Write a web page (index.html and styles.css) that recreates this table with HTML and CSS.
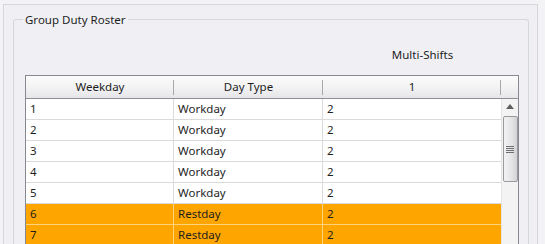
FILE: index.html
```html
<!DOCTYPE html>
<html>
<head>
<meta charset="utf-8">
<link rel="stylesheet" href="styles.css">
</head>
<body>
<div class="frame">
  <fieldset class="group">
    <legend class="group-title">Group Duty Roster</legend>
    <div class="caption-row"><span class="caption">Multi-Shifts</span></div>
    <div class="grid">
      <div class="header">
        <div class="hcell c1">Weekday<span class="hsep"></span></div>
        <div class="hcell c2">Day Type<span class="hsep"></span></div>
        <div class="hcell c3">1<span class="hsep"></span></div>
        <div class="hcell c4"></div>
      </div>
      <div class="body">
        <div class="rows">
          <div class="row"><div class="cell c1">1</div><div class="cell c2">Workday</div><div class="cell c3">2</div></div>
          <div class="row"><div class="cell c1">2</div><div class="cell c2">Workday</div><div class="cell c3">2</div></div>
          <div class="row"><div class="cell c1">3</div><div class="cell c2">Workday</div><div class="cell c3">2</div></div>
          <div class="row"><div class="cell c1">4</div><div class="cell c2">Workday</div><div class="cell c3">2</div></div>
          <div class="row"><div class="cell c1">5</div><div class="cell c2">Workday</div><div class="cell c3">2</div></div>
          <div class="row rest"><div class="cell c1">6</div><div class="cell c2">Restday</div><div class="cell c3">2</div></div>
          <div class="row rest"><div class="cell c1">7</div><div class="cell c2">Restday</div><div class="cell c3">2</div></div>
        </div>
        <div class="scrollbar">
          <svg class="arrow" width="8" height="5" viewBox="0 0 8 5"><path d="M0 5 L4 0 L8 5 Z" fill="#5f5f5f"/></svg>
          <div class="thumb">
            <div class="grip"><span></span><span></span><span></span><span></span></div>
          </div>
        </div>
      </div>
    </div>
  </fieldset>
</div>
</body>
</html>
```
FILE: styles.css
```css
html, body {
  margin: 0;
  padding: 0;
  overflow: hidden;
}
body {
  background: #f3f3f6;
  font-family: "Segoe UI", "Noto Sans", "Open Sans", sans-serif;
  font-size: 11.5px;
  color: #1e1e1e;
  padding-top: 4px;
  padding-left: 3px;
  height: 244px;
  box-sizing: border-box;
}
.frame {
  box-sizing: border-box;
  width: 535px;
  height: 240px;
  overflow: hidden;
  border: 1px solid #d6d6dc;
  border-bottom: none;
  background: #f0f0f4;
  padding: 7px 0 0 9px;
}
.group {
  box-sizing: border-box;
  width: 516px;
  margin: 0;
  padding: 0 9px 0 9px;
  border: 1px solid #d3d8dd;
  border-bottom: none;
  border-radius: 3px 3px 0 0;
  min-width: 0;
  height: 233px;
  overflow: hidden;
}
.group-title {
  padding: 0 2px;
  line-height: 15px;
  color: #1e1e1e;
}
.caption-row {
  margin-top: 20px;
  height: 16px;
  line-height: 16px;
  display: flex;
  padding-left: 303px;
}
.caption {
  width: 196px;
  text-align: center;
}
.grid {
  margin-top: 12px;
  margin-left: 2px;
  width: 494px;
  box-sizing: border-box;
  border: 1px solid #858890;
  border-bottom: none;
  background: #ffffff;
}
.header {
  display: flex;
  height: 22px;
  border-bottom: 1px solid #8e9096;
  background: linear-gradient(#fbfbfb, #f3f3f4 50%, #e6e6e9);
}
.hcell {
  position: relative;
  box-sizing: border-box;
  text-align: center;
  line-height: 22px;
}
.hsep {
  position: absolute;
  right: 0;
  top: 4px;
  width: 1px;
  height: 15px;
  background: #a6a8ad;
}
.c1 { width: 148px; }
.c2 { width: 149px; }
.c3 { width: 178px; }
.c4 { width: 17px; }
.body {
  display: flex;
}
.rows {
  width: 475px;
}
.row {
  display: flex;
  height: 21px;
  box-sizing: border-box;
  border-bottom: 1px solid #dadada;
}
.row.rest {
  background: #ffa500;
  border-bottom-color: #ffd27e;
}
.cell {
  box-sizing: border-box;
  line-height: 20px;
  padding-left: 4px;
}
.cell.c1, .cell.c2 {
  border-right: 1px solid #dadada;
}
.row.rest .cell.c1, .row.rest .cell.c2 {
  border-right-color: #ffd27e;
}
.scrollbar {
  width: 17px;
  background: #f3f3f3;
  border-left: 1px solid #e4e4e4;
  box-sizing: border-box;
  display: flex;
  flex-direction: column;
  align-items: center;
  padding-top: 5px;
  height: 160px;
}
.arrow {
  display: block;
}
.thumb {
  margin-top: 7px;
  width: 15px;
  height: 66px;
  box-sizing: border-box;
  border: 1px solid #9a9a9e;
  border-radius: 2px;
  background: linear-gradient(to right, #f2f2f3, #e4e4e6 60%, #d2d2d6);
  display: flex;
  align-items: center;
  justify-content: center;
}
.grip {
  display: flex;
  flex-direction: column;
  gap: 1px;
  margin-top: 1px;
}
.grip span {
  display: block;
  width: 8px;
  height: 1px;
  background: #6e6e72;
}
```
